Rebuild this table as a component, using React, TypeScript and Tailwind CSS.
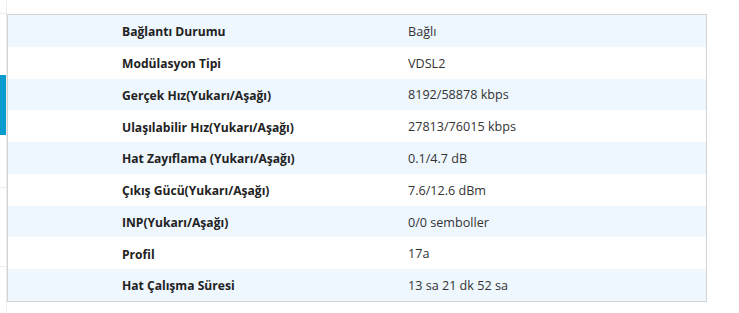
import React from "react";

const rows: [string, string][] = [
  ["Bağlantı Durumu", "Bağlı"],
  ["Modülasyon Tipi", "VDSL2"],
  ["Gerçek Hız(Yukarı/Aşağı)", "8192/58878 kbps"],
  ["Ulaşılabilir Hız(Yukarı/Aşağı)", "27813/76015 kbps"],
  ["Hat Zayıflama (Yukarı/Aşağı)", "0.1/4.7 dB"],
  ["Çıkış Gücü(Yukarı/Aşağı)", "7.6/12.6 dBm"],
  ["INP(Yukarı/Aşağı)", "0/0 semboller"],
  ["Profil", "17a"],
  ["Hat Çalışma Süresi", "13 sa 21 dk 52 sa"],
];

export default function App() {
  return (
    <div
      className="w-[739px] h-[313px] bg-white flex overflow-hidden text-[#333]"
      style={{ fontFamily: '"Open Sans", "Noto Sans", sans-serif' }}
    >
      <div className="w-[7px] shrink-0 border-r border-[#ececec] flex flex-col">
        <div className="h-[14px] border-b border-[#ececec]" />
        <div className="h-[61px]" />
        <div className="h-[60px] bg-[#0a9bcf]" />
        <div className="h-[52px]" />
        <div className="h-[79px] border-t border-[#ececec]" />
        <div className="flex-1 border-t border-[#ececec]" />
      </div>
      <div className="pt-[14px]">
        <div className="w-[700px] border border-[#d4d4d4]">
          {rows.map(([k, v], i) => (
            <div
              key={k}
              className={`flex items-center pt-[3px] h-[31.78px] ${i % 2 === 0 ? "bg-[#eef6fe]" : "bg-white"}`}
            >
              <div className="w-[400px] pl-[114px] font-bold text-[12.1px] text-[#222]">{k}</div>
              <div className="text-[12.6px] text-[#333]">{v}</div>
            </div>
          ))}
        </div>
      </div>
    </div>
  );
}
